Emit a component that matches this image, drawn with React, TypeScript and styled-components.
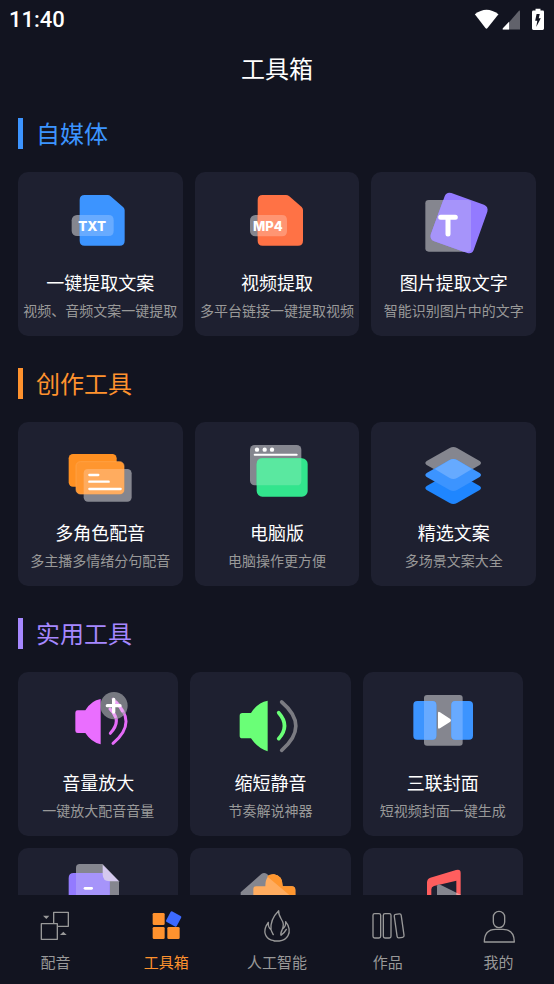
import React from "react";
import styled, { createGlobalStyle } from "styled-components";

const GlobalStyle = createGlobalStyle`
  * { box-sizing: border-box; }
  body {
    margin: 0;
    background: #121420;
    font-family: "Noto Sans CJK SC", "Noto Sans", sans-serif;
  }
  button { font-family: inherit; }
`;

const Screen = styled.div`
  display: flex;
  flex-direction: column;
  height: 100vh;
  color: #fff;
  background: #121420;
`;

const StatusBar = styled.div`
  display: flex;
  align-items: center;
  justify-content: space-between;
  flex: none;
  height: 40px;
  padding: 0 10px 0 9px;
`;

const Clock = styled.time`
  font: 500 22px/24px Roboto, sans-serif;
`;

const StatusIcons = styled.svg`
  width: 72px;
  height: 24px;
`;

const PageTitle = styled.h1`
  flex: none;
  margin: 10px 0 0;
  font-size: 24px;
  line-height: 36px;
  font-weight: 400;
  text-align: center;
`;

const Content = styled.main`
  display: flex;
  flex-direction: column;
  gap: 32px;
  flex: 1;
  min-height: 0;
  margin-top: 16px;
  padding: 16px 18px 0;
  overflow-y: auto;
  scrollbar-width: none;
`;

const Section = styled.section`
  display: flex;
  flex-direction: column;
  gap: 23px;
`;

const SectionTitle = styled.h2<{ $color: string }>`
  margin: 0;
  padding: 0 0 2px 13px;
  border-left: 5px solid ${(p) => p.$color};
  color: ${(p) => p.$color};
  font-size: 24px;
  line-height: 29px;
  font-weight: 400;
`;

const CardGrid = styled.div<{ $inset?: boolean }>`
  display: grid;
  grid-template-columns: repeat(3, minmax(0, 1fr));
  gap: 12px;
  padding-right: ${(p) => (p.$inset ? "13px" : "0")};
`;

const Card = styled.button`
  display: flex;
  flex-direction: column;
  align-items: center;
  min-height: 164px;
  padding: 8px 0 0;
  border: 0;
  border-radius: 10px;
  background: #1e2030;
  color: #fff;
  cursor: pointer;
`;

const CardIcon = styled.svg`
  flex: none;
  width: 80px;
  height: 80px;
`;

const CardTitle = styled.span`
  margin-top: 10px;
  font-size: 18px;
  line-height: 24px;
  white-space: nowrap;
`;

const CardNote = styled.span`
  margin-top: 6px;
  color: #999;
  font-size: 14px;
  line-height: 20px;
  white-space: nowrap;
`;

const TabBar = styled.nav`
  display: grid;
  grid-template-columns: repeat(5, 1fr);
  flex: none;
  padding: 13px 0 12px;
  background: #121420;
`;

const Tab = styled.a<{ $active?: boolean }>`
  display: flex;
  flex-direction: column;
  align-items: center;
  gap: 8px;
  color: ${(p) => (p.$active ? "#ff922e" : "#999")};
  font-size: 15px;
  line-height: 20px;
  text-decoration: none;
`;

const TabIcon = styled.svg`
  width: 40px;
  height: 36px;
`;

const glass = "#85868f";

type Item = { id: string; title?: string; note?: string; box: string; art: React.ReactNode };
type Group = { title: string; color: string; inset?: boolean; items: Item[] };

const groups: Group[] = [
  {
    title: "自媒体",
    color: "#3c94ff",
    items: [
      {
        id: "txt",
        title: "一键提取文案",
        note: "视频、音频文案一键提取",
        box: "151 45 240 240",
        art: (
          <>
            <rect x="186" y="150" width="60" height="63" rx="16" fill={glass} />
            <path d="M225 90H294Q299 90 303 94L341 127Q345 131 345 136V227Q345 242 330 242H225Q210 242 210 227V105Q210 90 225 90Z" fill="#3c94ff" />
            <path d="M210 150H297Q312 150 312 166V197Q312 213 297 213H210Z" fill="#68abff" />
            <text x="206" y="198" fontFamily="Inter" fontWeight="800" fontSize="40" fill="#fff">TXT</text>
          </>
        ),
      },
      {
        id: "mp4",
        title: "视频提取",
        note: "多平台链接一键提取视频",
        box: "141 45 240 240",
        art: (
          <>
            <rect x="180" y="150" width="60" height="64" rx="16" fill={glass} />
            <path d="M218 90H288Q293 90 298 94L335 126Q339 130 339 135V227Q339 242 324 242H218Q203 242 203 227V105Q203 90 218 90Z" fill="#ff7245" />
            <path d="M203 150H276Q291 150 291 166V198Q291 214 276 214H203Z" fill="#ff9573" />
            <text x="189" y="197" fontFamily="Inter" fontWeight="800" fontSize="39" fill="#fff">MP4</text>
          </>
        ),
      },
      {
        id: "image-text",
        title: "图片提取文字",
        note: "智能识别图片中的文字",
        box: "146 45 240 240",
        art: (
          <>
            <clipPath id="tilted"><path d="M258 84L356 119Q370 125 366 140L325 255Q320 268 306 264L207 229Q193 223 196 209L238 94Q243 80 258 84Z" /></clipPath>
            <rect x="180" y="105" width="137" height="155" rx="10" fill={glass} />
            <path d="M258 84L356 119Q370 125 366 140L325 255Q320 268 306 264L207 229Q193 223 196 209L238 94Q243 80 258 84Z" fill="#937aff" />
            <rect x="180" y="105" width="137" height="155" rx="10" fill="#a694fa" clipPath="url(#tilted)" />
            <path d="M226 157H270M248 157V207" stroke="#fff" strokeWidth="15" strokeLinecap="round" />
          </>
        ),
      },
    ],
  },
  {
    title: "创作工具",
    color: "#ff922e",
    items: [
      {
        id: "roles",
        title: "多角色配音",
        note: "多主播多情绪分句配音",
        box: "151 45 240 240",
        art: (
          <>
            <rect x="177" y="117" width="144" height="98" rx="13" fill="#ff9022" />
            <rect x="222" y="162" width="144" height="98" rx="13" fill={glass} />
            <rect x="199" y="140" width="144" height="97" rx="13" fill="#ff962f" stroke="#ffa650" strokeWidth="2" />
            <path d="M235 162H343V224Q343 237 330 237H222V175Q222 162 235 162Z" fill="#ffac5f" />
            <path d="M239 180H266M239 200H297M239 222H333" stroke="#fff" strokeWidth="7" strokeLinecap="round" />
          </>
        ),
      },
      {
        id: "desktop",
        title: "电脑版",
        note: "电脑操作更方便",
        box: "141 45 240 240",
        art: (
          <>
            <rect x="180" y="90" width="154" height="121" rx="14" fill={glass} />
            <rect x="200" y="130" width="153" height="115" rx="17" fill="#32e58d" />
            <path d="M217 130H334V197Q334 211 320 211H200V147Q200 130 217 130Z" fill="#5ae8a0" />
            <path d="M194 119H320" stroke="#fff" strokeWidth="6" strokeLinecap="round" />
            <g fill="#fff"><circle cx="201" cy="104" r="6.5" /><circle cx="224" cy="104" r="6.5" /><circle cx="246" cy="104" r="6.5" /></g>
          </>
        ),
      },
      {
        id: "library",
        title: "精选文案",
        note: "多场景文案大全",
        box: "146 45 240 240",
        art: (
          <>
            <path d="M184 138L253 99Q264 93 275 99L343 138Q351 144 343 150L275 189Q264 195 253 189L184 150Q176 144 184 138Z" fill={glass} />
            <path d="M184 213L253 174Q264 168 275 174L343 213Q351 219 343 225L275 264Q264 270 253 264L184 225Q176 219 184 213Z" fill="#1f86ff" />
            <path d="M184 174L253 135Q264 129 275 135L343 174Q351 180 343 186L275 225Q264 231 253 225L184 186Q176 180 184 174Z" fill="#3c94ff" />
            <path d="M208 162L253 135Q264 129 275 135L320 162L275 189Q264 195 253 189Z" fill="#66aaff" />
          </>
        ),
      },
    ],
  },
  {
    title: "实用工具",
    color: "#a688ff",
    inset: true,
    items: [
      {
        id: "louder",
        title: "音量放大",
        note: "一键放大配音音量",
        box: "145 210 240 240",
        art: (
          <>
            <path d="M197 308Q197 301 204 301H227Q245 271 273 267V403Q245 397 227 369H204Q197 369 197 362Z" fill="#ea6eff" />
            <g fill="none" stroke="#e56bf8" strokeWidth="9" strokeLinecap="round">
              <path d="M302 297Q338 331 302 370" />
              <path d="M310 267Q388 336 310 400" />
            </g>
            <circle cx="313" cy="287" r="41" fill="#a8a9ad" fillOpacity=".65" />
            <path d="M301 297Q312 307 317 320M319 276Q330 287 338 303" fill="none" stroke="#eea0f8" strokeWidth="9" strokeLinecap="round" />
            <path d="M293 287H331M312 268V306" stroke="#fff" strokeWidth="10" strokeLinecap="round" />
          </>
        ),
      },
      {
        id: "silence",
        title: "缩短静音",
        note: "节奏解说神器",
        box: "136 45 240 240",
        art: (
          <>
            <path d="M165 152Q165 144 173 144H199Q218 113 249 107V259Q218 249 199 220H173Q165 220 165 212Z" fill="#6aff77" />
            <path d="M282 143Q317 182 282 221" fill="none" stroke="#6aff77" strokeWidth="11" strokeLinecap="round" />
            <path d="M291 111Q376 183 291 256" fill="none" stroke="#7b7b82" strokeWidth="11" strokeLinecap="round" />
          </>
        ),
      },
      {
        id: "cover",
        title: "三联封面",
        note: "短视频封面一键生成",
        box: "144 45 240 240",
        art: (
          <>
            <rect x="207" y="90" width="116" height="152" rx="9" fill={glass} />
            <rect x="175" y="108" width="69" height="116" rx="12" fill="#3c94ff" />
            <rect x="289" y="108" width="65" height="116" rx="12" fill="#3c94ff" />
            <path d="M207 108H232Q244 108 244 120V212Q244 224 232 224H207ZM323 108H301Q289 108 289 120V212Q289 224 301 224H323Z" fill="#68aaff" />
            <path d="M249 145Q249 138 255 142L286 162Q290 166 286 170L255 190Q249 194 249 187Z" fill="#fff" />
          </>
        ),
      },
      {
        id: "document",
        box: "175 48 240 240",
        art: (
          <>
            <path d="M240 72H309L358 124V230H229V83Q229 72 240 72Z" fill={glass} />
            <path d="M222 99H330V240H207V114Q207 99 222 99Z" fill="#937aff" />
            <path d="M229 99H318Q330 99 330 111V240H229Z" fill="#a694fa" />
            <path d="M309 74L358 124H330Q309 124 309 103Z" fill="#d5c9ef" />
            <path d="M256 145H276" stroke="#fff" strokeWidth="8" strokeLinecap="round" />
          </>
        ),
      },
      {
        id: "plugin",
        box: "692 48 240 240",
        art: (
          <>
            <path d="M724 157L786 102Q794 96 803 102L870 165L794 235L724 172Z" fill={glass} />
            <path d="M771 139H798Q798 103 824 103Q850 106 850 139H877Q888 139 888 150V240H762V148Q762 139 771 139Z" fill="#ffac5f" />
            <path d="M803 109Q811 102 824 103Q850 106 850 139H877Q888 139 888 150V240H870V165Z" fill="#ff962f" />
          </>
        ),
      },
      {
        id: "music",
        box: "387 48 240 240",
        art: (
          <>
            <path d="M459 240V127Q459 117 469 113L546 90Q560 86 560 99V240H547V122L480 138Q472 140 472 148V240Z" fill="#ff5e5e" />
            <path d="M489 139Q490 130 499 134L563 166V215L489 240Z" fill={glass} />
            <path d="M547 158L560 164V220H547Z" fill="#ff9a9a" />
          </>
        ),
      },
    ],
  },
];

const tabs = [
  {
    label: "配音",
    box: "106 204 120 108",
    art: (
      <>
        <path d="M162 250V217H206V259H173M125 251H173V298H125Z" fill="none" stroke="#999" strokeWidth="4" strokeLinejoin="round" />
        <path d="M130 227H149L140 237ZM181 285H201L191 275Z" fill="#999" />
      </>
    ),
  },
  {
    label: "工具箱",
    active: true,
    box: "439 204 120 108",
    art: (
      <>
        <g fill="#ff922e"><rect x="459" y="219" width="36" height="36" rx="4" /><rect x="459" y="261" width="36" height="36" rx="4" /><rect x="503" y="261" width="37" height="36" rx="4" /></g>
        <rect x="504" y="219" width="36" height="36" rx="4" fill="#3d6aff" transform="rotate(28 522 237)" />
      </>
    ),
  },
  {
    label: "人工智能",
    box: "771 204 120 108",
    art: (
      <path d="M822 302C799 299 790 280 797 261C799 255 803 251 805 247C804 258 808 265 813 269C811 247 820 228 836 212C834 232 850 239 850 253C850 258 849 263 847 268C855 262 858 253 857 245C868 258 871 275 864 287C858 298 849 302 838 303H822M813 269C815 276 818 280 820 284M847 268C843 276 841 281 843 286C849 281 855 276 859 268" fill="none" stroke="#999" strokeWidth="4" strokeLinecap="round" strokeLinejoin="round" />
    ),
  },
  {
    label: "作品",
    box: "281 204 120 108",
    art: (
      <g fill="none" stroke="#999" strokeWidth="4">
        <rect x="296" y="221" width="23" height="73" rx="5" />
        <rect x="327" y="221" width="23" height="73" rx="5" />
        <rect x="364" y="222" width="21" height="71" rx="5" transform="rotate(-8 375 258)" />
      </g>
    ),
  },
  {
    label: "我的",
    box: "614 204 120 108",
    art: (
      <g fill="none" stroke="#999" strokeWidth="4" strokeLinejoin="round">
        <rect x="657" y="214" width="34" height="49" rx="17" />
        <path d="M630 306Q630 268 664 268H686Q720 268 720 306Z" />
      </g>
    ),
  },
];

export default function App() {
  return (
    <Screen>
      <GlobalStyle />
      <StatusBar>
        <Clock>11:40</Clock>
        <StatusIcons viewBox="1336 22 204 68" aria-hidden="true">
          <path d="M1344 40Q1377 14 1411 40L1380 79Q1377 82 1374 79Z" fill="#fff" />
          <path d="M1469 30Q1472 28 1472 33V83H1423Z" fill="#61626b" />
          <path d="M1441 61V83H1423Q1422 81 1424 79Z" fill="#fff" />
          <path d="M1516 24H1530V29H1537Q1540 29 1540 33V80Q1540 84 1536 84H1510Q1506 84 1506 80V33Q1506 29 1510 29H1516Z" fill="#fff" />
          <path d="M1519 39H1528L1525 51H1531L1518 76L1521 58H1515Z" fill="#121420" />
        </StatusIcons>
      </StatusBar>
      <PageTitle>工具箱</PageTitle>
      <Content>
        {groups.map((group) => (
          <Section key={group.title}>
            <SectionTitle $color={group.color}>{group.title}</SectionTitle>
            <CardGrid $inset={group.inset}>
              {group.items.map((item) => (
                <Card key={item.id} type="button">
                  <CardIcon viewBox={item.box} aria-hidden="true">{item.art}</CardIcon>
                  {item.title && <CardTitle>{item.title}</CardTitle>}
                  {item.note && <CardNote>{item.note}</CardNote>}
                </Card>
              ))}
            </CardGrid>
          </Section>
        ))}
      </Content>
      <TabBar>
        {tabs.map((tab) => (
          <Tab key={tab.label} href="#" $active={tab.active} aria-current={tab.active ? "page" : undefined}>
            <TabIcon viewBox={tab.box} aria-hidden="true">{tab.art}</TabIcon>
            {tab.label}
          </Tab>
        ))}
      </TabBar>
    </Screen>
  );
}
